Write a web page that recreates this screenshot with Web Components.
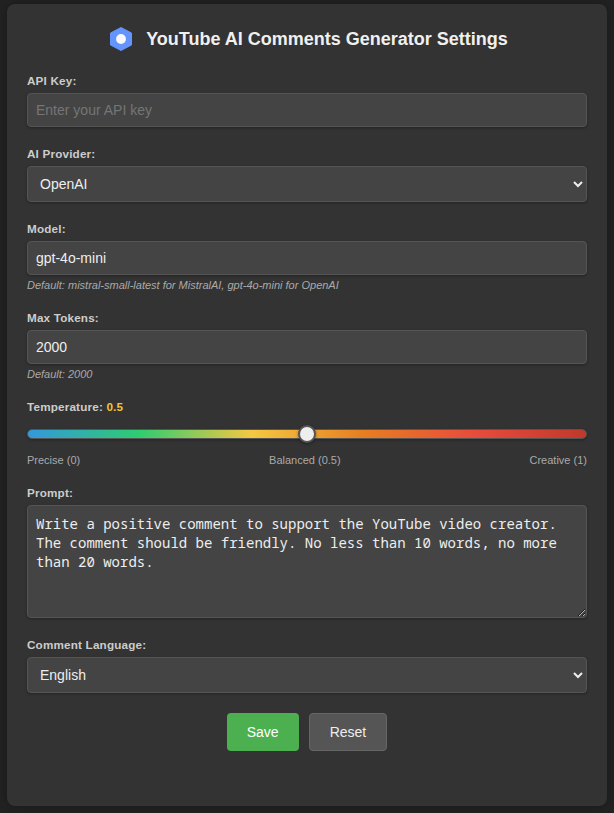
<!DOCTYPE html>
<html lang="en">
<head>
<meta charset="utf-8">
<title>YouTube AI Comments Generator Settings</title>
<style>
html { background: #222; }
body { margin: 0; padding: 4px 7px 7px; font-family: "Liberation Sans", Arial, sans-serif; color: #eee; background: #222; }
</style>
</head>
<body>
<settings-panel>
  <panel-header slot="header">YouTube AI Comments Generator Settings</panel-header>
  <form-field label="API Key:"><text-input placeholder="Enter your API key"></text-input></form-field>
  <form-field label="AI Provider:"><select-input value="OpenAI"></select-input></form-field>
  <form-field label="Model:" hint="Default: mistral-small-latest for MistralAI, gpt-4o-mini for OpenAI"><text-input value="gpt-4o-mini"></text-input></form-field>
  <form-field label="Max Tokens:" hint="Default: 2000"><text-input value="2000"></text-input></form-field>
  <form-field label="Temperature:" accent="0.5"><range-slider></range-slider></form-field>
  <form-field label="Prompt:"><prompt-area>Write a positive comment to support the YouTube video creator. The comment should be friendly. No less than 10 words, no more than 20 words.</prompt-area></form-field>
  <form-field label="Comment Language:"><select-input value="English"></select-input></form-field>
  <action-button slot="actions" primary>Save</action-button>
  <action-button slot="actions">Reset</action-button>
</settings-panel>
<script>
const define = (name, render) => customElements.define(name, class extends HTMLElement {
  constructor() { super(); this.attachShadow({ mode: "open" }); }
  connectedCallback() { this.shadowRoot.innerHTML = render(this); }
});
const box = `box-sizing: border-box; width: 100%; margin: 0; display: block; background: #444; color: #eee;
  border: 1px solid #555; border-radius: 4px; box-shadow: 0 1px 3px rgba(0,0,0,.3); outline: none;`;

define("settings-panel", () => `
<style>
:host { display: flex; flex-direction: column; gap: 20px; box-sizing: border-box; height: 802px; padding: 20px;
  background: #333; border-radius: 8px; box-shadow: 0 0 10px rgba(0,0,0,.3); }
footer { display: flex; justify-content: center; gap: 10px; }
</style>
<slot name="header"></slot><slot></slot><footer><slot name="actions"></slot></footer>`);

define("panel-header", () => `
<style>
:host { display: flex; align-items: center; justify-content: center; height: 30px; gap: 13px; padding-left: 3px; }
h1 { margin: 0; font-size: 18px; line-height: 20px; font-weight: bold; color: #f0f0f0; }
svg { display: block; }
</style>
<svg width="24" height="24" viewBox="0 0 24 24"><path d="M12 .5 22.5 6v12L12 23.5 1.5 18V6z" fill="#6495ff" stroke="#6495ff" stroke-width="1" stroke-linejoin="round"/><circle cx="12" cy="12" r="4.9" fill="#fafafa"/></svg>
<h1><slot></slot></h1>`);

define("form-field", el => `
<style>
:host { display: block; }
label { display: block; height: 14px; line-height: 14px; margin-bottom: 5px; font-size: 11.7px; letter-spacing: .18px; font-weight: bold; color: #ccc; white-space: pre; }
b { color: #f4c430; }
p { margin: 4px 0 0; height: 12px; line-height: 12px; font-size: 11px; font-style: italic; color: #aaa; }
</style>
<label>${el.getAttribute("label")}${el.hasAttribute("accent") ? ` <b>${el.getAttribute("accent")}</b>` : ""}</label>
<slot></slot>${el.hasAttribute("hint") ? `<p>${el.getAttribute("hint")}</p>` : ""}`);

define("text-input", el => `
<style>
:host { display: block; }
input { ${box} height: 34px; padding: 8px; font: 14px "Liberation Sans", Arial, sans-serif; }
input::placeholder { color: #757575; }
</style>
<input type="text" placeholder="${el.getAttribute("placeholder") || ""}" value="${el.getAttribute("value") || ""}">`);

define("select-input", el => `
<style>
:host { display: block; }
select { ${box} height: 36px; padding: 8px; font: 14px "Liberation Sans", Arial, sans-serif; }
</style>
<select><option>${el.getAttribute("value")}</option></select>`);

define("range-slider", () => `
<style>
:host { display: block; padding-top: 10px; }
input { -webkit-appearance: none; appearance: none; display: block; box-sizing: border-box; width: 100%; height: 10px; margin: 0;
  border: 1px solid #555; border-radius: 5px; box-shadow: 0 1px 3px rgba(0,0,0,.3);
  background: linear-gradient(to right, #3498db, #2ecc71 20%, #f4c842 40%, #e67e22 60%, #e74c3c 80%, #c0392b); }
input::-webkit-slider-thumb { -webkit-appearance: none; box-sizing: border-box; width: 18px; height: 18px; border-radius: 50%;
  background: #eee; border: 2px solid #555; box-shadow: 0 1px 3px rgba(0,0,0,.4); }
div { display: flex; justify-content: space-between; margin-top: 15px; height: 12px; line-height: 12px; font-size: 11px; color: #aaa; }
</style>
<input type="range" min="0" max="1" step="0.1" value="0.5">
<div><span>Precise (0)</span><span>Balanced (0.5)</span><span>Creative (1)</span></div>`);

define("prompt-area", el => `
<style>
:host { display: block; }
textarea { ${box} height: 113px; padding: 8px; resize: vertical; font: 14px/19px "Noto Sans Mono", "DejaVu Sans Mono", monospace; overflow: auto; }
</style>
<textarea>${el.textContent}</textarea>`);

define("action-button", el => `
<style>
:host { display: block; }
button { display: block; box-sizing: border-box; height: 38px; padding: 0 20px; margin: 0; border-radius: 4px;
  font: 14px "Liberation Sans", Arial, sans-serif; color: ${el.hasAttribute("primary") ? "#fff" : "#eee"};
  background: ${el.hasAttribute("primary") ? "#4caf50" : "#555"}; border: ${el.hasAttribute("primary") ? "0" : "1px solid #666"}; }
</style>
<button><slot></slot></button>`);
</script>
</body>
</html>
